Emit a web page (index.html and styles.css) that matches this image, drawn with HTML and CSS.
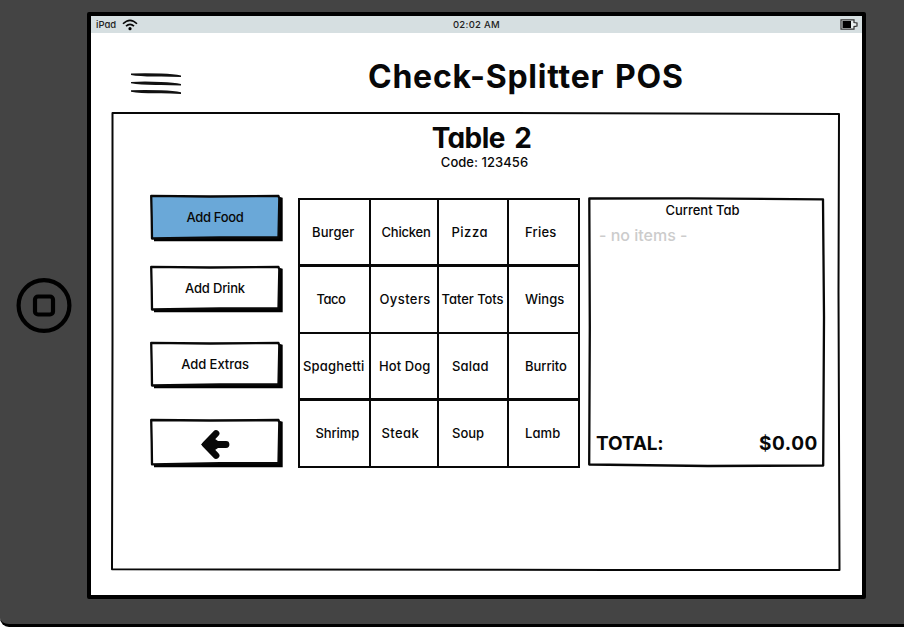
FILE: index.html
```
<!DOCTYPE html>
<html lang="en">
<head>
<meta charset="utf-8">
<title>Check-Splitter POS</title>
<link rel="stylesheet" href="styles.css">
</head>
<body>
<div class="device">
  <aside class="bezel">
    <svg class="home" viewBox="0 0 56 56"><circle cx="28" cy="27.5" r="25.4"/><rect x="19" y="18.500" width="18" height="18" rx="3"/></svg>
  </aside>
  <main class="screen">
    <div class="status">
      <span class="carrier"><span class="t s-ipad">iPad</span>
        <svg class="wifi" viewBox="0 0 16 12"><path d="M1 4.8Q8-2.2 15 4.8M4 7.2Q8 3.4 12 7.2"/><circle cx="8" cy="9.7" r="1.6"/></svg>
      </span>
      <span class="t s-time">02:02 AM</span>
      <svg class="battery" viewBox="0 0 18 11"><path class="cell-body" d="M1 .8H14V3.5L17 4V7L14 7.6V10.2H1Z"/><path d="M2.5 2H11V9H2.5Z"/></svg>
    </div>
    <header class="top">
      <svg class="menu" viewBox="0 0 50 22"><path d="M0 .6Q13-.2 30 .6Q43 1 50 2.400V4Q39 3.500 30 3.400Q10 3.800 0 2ZM0 8.900Q13 8.100 30 8.900Q43 9.400 50 10.900V12.500Q39 12 30 11.900Q10 12.200 0 10.300ZM0 17.300Q13 16.500 30 17.300Q43 17.900 50 19.300V20.900Q39 20.400 30 20.300Q10 20.600 0 18.700Z"/></svg>
      <h1 class="t title">Check-Splitter POS</h1>
    </header>
    <section class="panel">
      <svg class="frame thin" viewBox="0 0 730 460"><path d="M1.500 1L400 1L728 2L727.500 180L728.500 458L500 458L1 457.300L1.500 230Z"/></svg>
      <h2 class="t table-name">Table 2</h2>
      <p class="t code">Code: 123456</p>
      <div class="work">
        <nav class="actions">
          <button class="btn on"><svg class="frame" viewBox="0 0 133 47"><path class="shade" d="M130 2L132.700 2.700V46.300H4V43Z"/><path class="face" d="M1.200 .9L60 1.500L128.500 1L129.300 3.500L128.500 42.500L70 42.500L2 43.500L1.700 22Z"/></svg><span class="t b1">Add Food</span></button>
          <button class="btn"><svg class="frame" viewBox="0 0 133 47"><path class="shade" d="M130 2L132.700 2.700V46.300H4V43Z"/><path class="face" d="M1.200 .9L60 1.500L128.500 1L129.300 3.500L128.500 42.500L70 42.500L2 43.500L1.700 22Z"/></svg><span class="t b2">Add Drink</span></button>
          <button class="btn gap"><svg class="frame" viewBox="0 0 133 47"><path class="shade" d="M130 2L132.700 2.700V46.300H4V43Z"/><path class="face" d="M1.200 .9L60 1.500L128.500 1L129.300 3.500L128.500 42.500L70 42.500L2 43.500L1.700 22Z"/></svg><span class="t b3">Add Extras</span></button>
          <button class="btn back" aria-label="Back"><svg class="frame" viewBox="0 0 133 47" preserveAspectRatio="none"><path class="shade" d="M130 2L132.700 2.700V46.300H4V43Z"/><path class="face" d="M1.200 .9L60 1.500L128.500 1L129.300 3.500L128.500 42.500L70 42.500L2 43.500L1.700 22Z"/></svg><svg class="arrow" viewBox="0 0 28 30"><path class="head" d="M0 15.500L9 6.500L17 12V19L9 24.500Z"/><path d="M15 4.500L4.500 15.500L15 26.500M7 15.500H25"/></svg></button>
        </nav>
        <div class="foods">
          <div class="cell"><span class="t f1">Burger</span></div><div class="cell"><span class="t f2">Chicken</span></div><div class="cell"><span class="t f3">Pizza</span></div><div class="cell"><span class="t f4">Fries</span></div>
          <div class="cell"><span class="t f5">Taco</span></div><div class="cell"><span class="t f6">Oysters</span></div><div class="cell"><span class="t f7">Tater Tots</span></div><div class="cell"><span class="t f8">Wings</span></div>
          <div class="cell"><span class="t f9">Spaghetti</span></div><div class="cell"><span class="t f10">Hot Dog</span></div><div class="cell"><span class="t f11">Salad</span></div><div class="cell"><span class="t f12">Burrito</span></div>
          <div class="cell"><span class="t f13">Shrimp</span></div><div class="cell"><span class="t f14">Steak</span></div><div class="cell"><span class="t f15">Soup</span></div><div class="cell"><span class="t f16">Lamb</span></div>
        </div>
        <section class="tab">
          <svg class="frame" viewBox="0 0 237 270"><path d="M1.300 1.500L100 1.300L235 2.300L236 120L235.200 268.500L120 269L1.200 267.500L1.800 130Z"/></svg>
          <h3 class="t tab-title">Current Tab</h3>
          <p class="t empty">- no items -</p>
          <div class="total"><span class="t t1">TOTAL:</span><span class="t t2">$0.00</span></div>
        </section>
      </div>
    </section>
  </main>
</div>
</body>
</html>
```
FILE: styles.css
```
* { box-sizing: border-box; margin: 0; padding: 0; }
body { width: 904px; height: 628px; overflow: hidden; background: #fff; color: #080808; font: 500 13px/16px Inter, "Noto Sans", sans-serif; font-feature-settings: "cv11"; }
svg { display: block; fill: none; stroke: #080808; overflow: visible; }
.t { white-space: nowrap; }
.device { display: flex; width: 904px; height: 627px; padding-top: 12px; background: #444; border-bottom: 3px solid #000; border-bottom-left-radius: 9px; }
.bezel { width: 87px; padding: 266px 0 0 16px; }
.home { width: 56px; height: 56px; stroke: #000; stroke-width: 4.200px; }
.screen { width: 779px; height: 587px; background: #fff; border: 4px solid #000; border-radius: 2px; }
.status { display: grid; grid-template-columns: 1fr auto 1fr; align-items: center; height: 17px; padding: 0 4px 0 5px; background: #d6dfe1; font-size: 9.500px; color: #222; }
.s-time { letter-spacing: .3px; margin-right: 1px; }
.carrier { display: flex; align-items: center; gap: 6px; }
.wifi { width: 16px; height: 12px; stroke-width: 1.600px; }
.wifi circle { fill: #000; stroke: none; }
.battery { width: 18px; height: 11px; justify-self: end; }
.battery path { fill: #000; stroke: none; }
.battery .cell-body { fill: #e8eeee; stroke: #333; stroke-width: 1.200px; }
.top { display: flex; height: 79px; padding: 24px 0 0 40px; }
.menu { width: 50px; height: 22px; margin-top: 16px; fill: #111; stroke: none; }
.title { margin: 0 0 0 187px; font-size: 32px; line-height: 40px; font-weight: 700; letter-spacing: .75px; word-spacing: 2.500px; }
.panel { position: relative; width: 730px; height: 460px; margin-left: 20px; }
.frame { position: absolute; inset: 0; width: 100%; height: 100%; stroke-width: 2.300px; stroke-linejoin: round; }
.frame.thin { stroke-width: 2px; }
.table-name { padding: 10px 0 0 11px; text-align: center; font-size: 28px; line-height: 32px; font-weight: 700; letter-spacing: -.6px; word-spacing: 3.500px; }
.code { text-align: center; padding-left: 17px; letter-spacing: .05px; }
.work { display: flex; padding: 25px 0 0 39px; align-items: flex-start; }
.actions { width: 148px; }
.btn { position: relative; display: flex; justify-content: center; width: 133px; height: 47px; margin-bottom: 24px; padding: 14px 3px 0 0; border: 0; background: none; font: inherit; font-feature-settings: inherit; color: inherit; }
.btn span, .arrow { position: relative; }
.b1 { letter-spacing: -.35px; }
.b2 { letter-spacing: -.2px; }
.b3 { letter-spacing: -.05px; }
.btn.gap { margin: 29px 0 30px; }
.btn.back { height: 49px; margin: 0; padding-top: 10px; }
.btn .shade { fill: #000; stroke: none; }
.btn .face { fill: #fff; }
.btn.on .face { fill: #6aa8d8; }
.arrow { width: 28px; height: 30px; stroke-width: 6.800px; stroke-linecap: round; stroke-linejoin: round; }
.arrow .head { fill: #080808; stroke: none; }
.foods { display: grid; grid-template-columns: 71px 68px 70px 71px; grid-template-rows: repeat(4, 67px); width: 282px; height: 270px; margin-top: 3px; border: 1px solid #080808; }
.cell { border: 1px solid #080808; padding-top: 24px; }
.cell:nth-child(-n+4), .cell:nth-child(n+9):nth-child(-n+12) { border-bottom-width: 2px; }
.f1 { margin-left: 12px; letter-spacing: .1px; }
.f2 { margin-left: 10.500px; letter-spacing: -.2px; }
.f3 { margin-left: 12.500px; letter-spacing: .5px; }
.f4 { margin-left: 16px; letter-spacing: .2px; }
.f5 { margin-left: 16.500px; letter-spacing: -.5px; }
.f6 { margin-left: 8.500px; letter-spacing: .4px; }
.f7 { margin-left: 2.500px; letter-spacing: -.05px; }
.f8 { margin-left: 16px; }
.f9 { margin-left: 3px; letter-spacing: .2px; }
.f10 { margin-left: 8px; letter-spacing: .1px; }
.f11 { margin-left: 13px; letter-spacing: .2px; }
.f12 { margin-left: 16px; letter-spacing: -.05px; }
.f13 { margin-left: 15.500px; letter-spacing: -.1px; }
.f14 { margin-left: 10.500px; letter-spacing: .4px; }
.f15 { margin-left: 13px; }
.f16 { margin-left: 16px; letter-spacing: .1px; }
.tab { position: relative; width: 237px; height: 270px; margin: 2px 0 0 8px; }
.tab-title { font-size: 13px; font-weight: 500; text-align: center; padding: 5px 8px 0 0; }
.empty { font-size: 16px; line-height: 20px; color: #ccc; padding: 7px 0 0 11px; }
.total { display: flex; justify-content: space-between; padding: 187px 7px 0 8px; font-size: 19px; line-height: 24px; font-weight: 700; }
.t1 { letter-spacing: -.15px; }
.t2 { letter-spacing: .6px; }
```
